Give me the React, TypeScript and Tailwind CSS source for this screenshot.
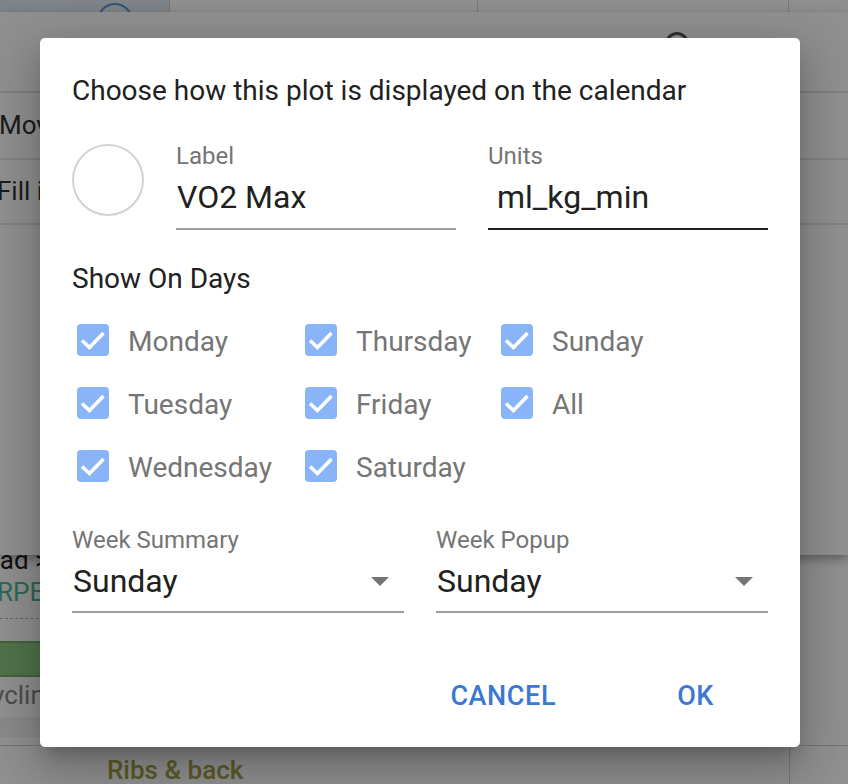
import React from "react";

function Check() {
  return (
    <div className="w-[32px] h-[32px] rounded-[4px] bg-[#8ab4f8] flex items-center justify-center shrink-0">
      <svg width="32" height="32" viewBox="0 0 32 32">
        <polyline points="5,16.5 12.5,23.5 26.5,9" fill="none" stroke="white" strokeWidth="3.6" />
      </svg>
    </div>
  );
}

function Day({ label }: { label: string }) {
  return (
    <div className="flex items-center h-[63px]">
      <Check />
      <span className="ml-[19px] mt-[4px] text-[28px] leading-[32px] text-[#757575]">{label}</span>
    </div>
  );
}

function SelectField({ label, value }: { label: string; value: string }) {
  return (
    <div className="flex-1 flex flex-col">
      <div className="h-[24px] mt-[1px] text-[24px] leading-[24px] text-[#757575]">{label}</div>
      <div className="mt-[11px] h-[36px] flex items-center justify-between">
        <span className="text-[32px] leading-[36px] text-[#212121] pl-[1px]">{value}</span>
        <svg width="18" height="9" viewBox="0 0 18 9" className="mr-[15px]">
          <polygon points="0,0 18,0 9,9" fill="#757575" />
        </svg>
      </div>
      <div className="mt-[12px] h-[2px] bg-[#9e9e9e]" />
    </div>
  );
}

export default function App() {
  return (
    <div className="relative w-[848px] h-[784px] overflow-hidden bg-white font-[Roboto,sans-serif]">
      {/* header strip */}
      <div className="flex h-[60px]">
        <div className="w-[170px] bg-[#e2ebf4] border-r border-[#d0d0d0] relative">
          <div className="absolute left-[97px] top-[3px] w-[36px] h-[36px] rounded-full border-2 border-[#5b95d2]" />
        </div>
        <div className="w-[308px] border-r border-[#d6d6d6]" />
        <div className="w-[311px] border-r border-[#d6d6d6]" />
        <div className="flex-1" />
      </div>

      {/* calendar body beneath the panel */}
      <div className="absolute left-0 top-[540px] w-[848px] flex">
        <div className="w-[170px] flex flex-col text-[26px]">
          <div className="h-[34px] pt-[6px] leading-[28px] text-[#222] -ml-[14px]">ead &gt;</div>
          <div className="h-[32px] leading-[32px] text-[#4fb99b] -ml-[3px] mt-[2px]">RPE :</div>
          <div className="mt-[10px] border-t border-dashed border-[#b5b5b5]" />
          <div className="mt-[22px] h-[36px] bg-[#8fcc85] border-y-2 border-[#72b16a]" />
          <div className="h-[40px] leading-[36px] text-[#888] -ml-[8px]">ycling</div>
          <div className="h-[20px] bg-[#f5f5f5]" />
        </div>
        <div className="w-[619px]" />
        <div className="flex-1 border-l border-[#d0d0d0]" />
      </div>
      <div className="absolute left-0 top-[745px] w-[848px] h-[40px] border-t border-[#d0d0d0] flex">
        <div className="w-[789px] pl-[107px] text-[26px] leading-[48px] text-[#a2a248] font-medium">Ribs &amp; back</div>
        <div className="flex-1 border-l border-[#d0d0d0]" />
      </div>

      {/* floating panel */}
      <div className="absolute left-0 top-[12px] w-[848px] h-[543px] bg-white shadow-[0_4px_10px_rgba(0,0,0,0.35)] flex flex-col">
        <div className="h-[81px] border-b-2 border-[#e4e4e4] relative">
          <div className="absolute left-[665px] top-[20px] w-[24px] h-[24px] rounded-full border-[3px] border-[#555]" />
        </div>
        <div className="h-[67px] border-b-2 border-[#e4e4e4] text-[26px] leading-[65px] text-[#333] -ml-[1px]">Move</div>
        <div className="h-[65px] border-b-2 border-[#e4e4e4] text-[26px] leading-[63px] text-[#333] -ml-[3px]">Fill in</div>
      </div>

      {/* backdrop */}
      <div className="absolute inset-0 bg-black/[0.44]" />

      {/* dialog */}
      <div className="absolute left-[40px] top-[38px] w-[760px] h-[709px] bg-white rounded-[5px] shadow-[0_11px_15px_-7px_rgba(0,0,0,0.2),0_24px_38px_3px_rgba(0,0,0,0.14),0_9px_46px_8px_rgba(0,0,0,0.12)] px-[32px] pt-[37px] flex flex-col">
        <div className="h-[32px] text-[28px] leading-[32px] text-[#212121]">
          Choose how this plot is displayed on the calendar
        </div>

        <div className="mt-[36px] flex gap-[32px]">
          <div className="mt-[1px] w-[72px] h-[72px] rounded-full border-2 border-[#d2d2d2] shrink-0" />
          <div className="flex-1 flex flex-col">
            <div className="h-[24px] mt-[1px] text-[24px] leading-[24px] text-[#757575]">Label</div>
            <div className="mt-[11px] h-[36px] text-[32px] leading-[36px] text-[#212121] pl-[1px]">VO2 Max</div>
            <div className="mt-[13px] h-[2px] bg-[#9e9e9e]" />
          </div>
          <div className="flex-1 flex flex-col">
            <div className="h-[24px] mt-[1px] text-[24px] leading-[24px] text-[#757575]">Units</div>
            <div className="mt-[11px] h-[36px] text-[32px] leading-[36px] text-[#212121] pl-[9px]">ml_kg_min</div>
            <div className="mt-[13px] h-[2px] bg-[#212121]" />
          </div>
        </div>

        <div className="mt-[33px] h-[32px] text-[28px] leading-[32px] text-[#212121]">Show On Days</div>

        <div className="mt-[13px] ml-[5px] grid grid-cols-[228px_196px_1fr]">
          <Day label="Monday" />
          <Day label="Thursday" />
          <Day label="Sunday" />
          <Day label="Tuesday" />
          <Day label="Friday" />
          <Day label="All" />
          <Day label="Wednesday" />
          <Day label="Saturday" />
        </div>

        <div className="mt-[30px] flex gap-[32px]">
          <SelectField label="Week Summary" value="Sunday" />
          <SelectField label="Week Popup" value="Sunday" />
        </div>

        <div className="mt-[67px] flex justify-end items-center pr-[54px] gap-[121px]">
          <button className="text-[27px] leading-[32px] font-medium text-[#3b78d1] tracking-[0.6px]">CANCEL</button>
          <button className="text-[27px] leading-[32px] font-medium text-[#3b78d1] tracking-[0.6px]">OK</button>
        </div>
      </div>
    </div>
  );
}
